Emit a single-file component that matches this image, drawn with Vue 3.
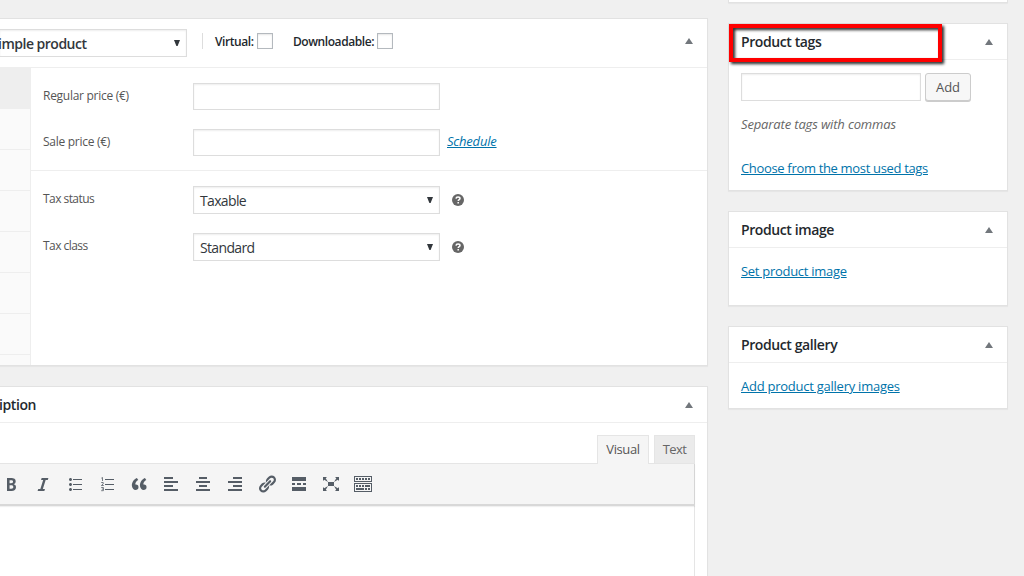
<template>
  <div class="page">
    <main class="col-main">
      <!-- product data -->
      <section class="postbox data-box">
        <header class="data-header">
          <div class="select type-select">
            <span class="t-type">imple product</span>
            <svg class="caret" width="6" height="6" viewBox="0 0 6 6"><path d="M0 0h6L3.6 6H2.4z" /></svg>
          </div>
          <span class="sep"></span>
          <label class="check virtual"><span>Virtual:</span><i class="checkbox"></i></label>
          <label class="check downloadable"><span>Downloadable:</span><i class="checkbox"></i></label>
          <svg class="toggle" width="8" height="6" viewBox="0 0 8 6"><path d="M4 0l4 6H0z" /></svg>
        </header>
        <div class="data-body">
          <ul class="tabs">
            <li v-for="n in 8" :key="n" :class="{ active: n === 1 }"></li>
          </ul>
          <div class="fields">
            <div class="group">
              <div class="row price">
                <span class="label l-regular">Regular price (€)</span>
                <span class="input"></span>
              </div>
              <div class="row price">
                <span class="label l-sale">Sale price (€)</span>
                <span class="input"></span>
                <a class="schedule">Schedule</a>
              </div>
            </div>
            <div class="group tax">
              <div v-for="row in taxRows" :key="row.label" class="row">
                <span class="label">{{ row.label }}</span>
                <span class="select field-select">
                  <span class="value">{{ row.value }}</span>
                  <svg class="caret" width="6" height="6" viewBox="0 0 6 6"><path d="M0 0h6L3.6 6H2.4z" /></svg>
                </span>
                <svg class="help" width="12" height="12" viewBox="0 0 12 12">
                  <circle cx="6" cy="6" r="6" />
                  <path d="M4 4.6C4.1 3.4 4.9 3 6 3s2 .6 2 1.500C8 5.700 6.200 5.600 6.200 7.100M6.200 8v1.500" />
                </svg>
              </div>
            </div>
          </div>
        </div>
      </section>

      <!-- description editor -->
      <section class="postbox desc-box">
        <header class="hndle desc-header">
          <h2 class="t-desc">iption</h2>
          <svg class="toggle" width="8" height="6" viewBox="0 0 8 6"><path d="M4 0l4 6H0z" /></svg>
        </header>
        <div class="editor">
          <div class="editor-tabs">
            <span class="tab tab-visual">Visual</span>
            <span class="tab tab-text">Text</span>
          </div>
          <div class="editor-frame">
            <div class="toolbar">
              <svg v-for="icon in icons" :key="icon.name" class="tool" width="20" height="20" viewBox="0 0 20 20">
                <path :d="icon.d" />
                <path v-if="icon.line" class="thin" :d="icon.line" />
              </svg>
            </div>
          </div>
        </div>
      </section>
    </main>

    <aside class="col-side">
      <section class="postbox prev-box"></section>

      <section class="postbox tags-box">
        <header class="hndle">
          <h2 class="t-tags">Product tags</h2>
          <svg class="toggle" width="8" height="6" viewBox="0 0 8 6"><path d="M4 0l4 6H0z" /></svg>
        </header>
        <div class="highlight"></div>
        <div class="inside">
          <div class="tag-form">
            <span class="tag-input"></span>
            <button class="button">Add</button>
          </div>
          <p class="howto">Separate tags with commas</p>
          <a class="t-choose">Choose from the most used tags</a>
        </div>
      </section>

      <section class="postbox image-box">
        <header class="hndle">
          <h2 class="t-image">Product image</h2>
          <svg class="toggle" width="8" height="6" viewBox="0 0 8 6"><path d="M4 0l4 6H0z" /></svg>
        </header>
        <div class="inside link-only"><a class="t-set">Set product image</a></div>
      </section>

      <section class="postbox gallery-box">
        <header class="hndle">
          <h2 class="t-gallery">Product gallery</h2>
          <svg class="toggle" width="8" height="6" viewBox="0 0 8 6"><path d="M4 0l4 6H0z" /></svg>
        </header>
        <div class="inside link-only"><a class="t-add">Add product gallery images</a></div>
      </section>
    </aside>
  </div>
</template>

<script setup>
const taxRows = [
  { label: 'Tax status', value: 'Taxable' },
  { label: 'Tax class', value: 'Standard' },
]

const icons = [
  { name: 'bold', d: 'M6 4v13h4.54c1.37 0 2.46-.33 3.26-1 .8-.66 1.2-1.58 1.2-2.77 0-.84-.17-1.51-.51-2.01s-.9-.85-1.67-1.03v-.09c.57-.1 1.02-.4 1.36-.9s.51-1.13.51-1.91c0-1.14-.39-1.98-1.17-2.5C12.75 4.26 11.5 4 9.78 4H6zm2.57 5.15V6.26h1.36c.73 0 1.27.11 1.61.32.34.22.51.58.51 1.07 0 .54-.16.92-.47 1.15s-.82.35-1.51.35h-1.5zm0 2.19h1.6c1.44 0 2.16.53 2.16 1.61 0 .6-.17 1.05-.51 1.34s-.86.43-1.57.43H8.57v-3.38z' },
  { name: 'italic', d: 'M14.78 6h-2.13l-2.8 9h2.12l-.62 2H4.6l.62-2h2.14l2.8-9H8.03l.62-2h6.75z' },
  { name: 'ul', d: 'M5.5 7C4.67 7 4 6.33 4 5.5 4 4.68 4.67 4 5.5 4 6.32 4 7 4.68 7 5.5 7 6.33 6.32 7 5.5 7zM8 5h9v1H8V5zm-2.5 7c-.83 0-1.5-.67-1.5-1.5C4 9.68 4.67 9 5.5 9c.82 0 1.5.68 1.5 1.5 0 .83-.68 1.5-1.5 1.5zM8 10h9v1H8v-1zm-2.5 7c-.83 0-1.5-.67-1.5-1.5 0-.82.67-1.5 1.5-1.5.82 0 1.5.68 1.5 1.5 0 .83-.68 1.5-1.5 1.5zM8 15h9v1H8v-1z' },
  { name: 'ol', d: 'M8 5h9v1H8zM8 10h9v1H8zM8 15h9v1H8z', line: 'M4.300 4.200L5.500 3.500V7M4.200 8.500h2v1.400L4.400 11.500h2.400M4.200 13.500h2.200v3.200H4.200M4.800 15.100h1.600' },
  { name: 'quote', d: 'M9.49 13.22c0-.74-.2-1.38-.61-1.9-.62-.78-1.83-.88-2.53-.72-.29-1.65 1.11-3.75 2.92-4.65L7.88 4c-2.73 1.3-5.42 4.28-4.96 8.05C3.21 14.43 4.59 16 6.54 16c.85 0 1.56-.25 2.12-.75s.83-1.18.83-2.03zm8.05 0c0-.74-.2-1.38-.61-1.9-.63-.78-1.83-.88-2.53-.72-.29-1.65 1.11-3.75 2.92-4.65L15.93 4c-2.73 1.3-5.41 4.28-4.95 8.05.29 2.38 1.66 3.95 3.61 3.95.85 0 1.56-.25 2.12-.75s.83-1.18.83-2.03z' },
  { name: 'left', d: 'M12 5V3H3v2h9zm5 4V7H3v2h14zm-5 4v-2H3v2h9zm5 4v-2H3v2h14z' },
  { name: 'center', d: 'M14 5V3H6v2h8zm3 4V7H3v2h14zm-3 4v-2H6v2h8zm3 4v-2H3v2h14z' },
  { name: 'right', d: 'M17 5V3H8v2h9zm0 4V7H3v2h14zm0 4v-2H8v2h9zm0 4v-2H3v2h14z' },
  { name: 'link', d: 'M17.74 2.76c1.68 1.69 1.68 4.41 0 6.1l-1.53 1.52c-1.12 1.12-2.7 1.47-4.14 1.09l2.62-2.61.76-.77.76-.76c.84-.84.84-2.2 0-3.04-.84-.85-2.2-.85-3.04 0l-.77.76-3.38 3.38c-.37-1.44-.02-3.02 1.1-4.14l1.52-1.53c1.69-1.68 4.42-1.68 6.1 0zM8.59 13.43l5.34-5.34c.42-.42.42-1.1 0-1.52-.44-.43-1.13-.39-1.53 0l-5.33 5.34c-.42.42-.42 1.1 0 1.52.44.43 1.13.39 1.52 0zm-.76 2.29l4.14-4.15c.38 1.44.03 3.02-1.09 4.14l-1.52 1.53c-1.69 1.68-4.41 1.68-6.1 0-1.68-1.68-1.68-4.42 0-6.1l1.53-1.52c1.12-1.12 2.7-1.47 4.14-1.1l-4.14 4.15c-.85.84-.85 2.2 0 3.05.84.84 2.2.84 3.04 0z' },
  { name: 'more', d: 'M17 7V3H3v4h14zM6 11V9H3v2h3zm6 0V9H8v2h4zm5 0V9h-3v2h3zm0 6v-4H3v4h14z' },
  { name: 'expand', d: 'M7 8h6v4H7zm-5 5v4h4l-1.200-1.200L7 12l-3.800 2.200zM14 17h4v-4l-1.200 1.200L13 12l2.200 3.800zM14 3l1.300 1.300L13 8l3.800-2.200L18 7V3zM6 3H2v4l1.200-1.200L7 8 4.700 4.300z' },
  { name: 'kitchensink', d: 'M19 2v6H1V2h18zm-1 5V3H2v4h16zM5 4v2H3V4h2zm3 0v2H6V4h2zm3 0v2H9V4h2zm3 0v2h-2V4h2zm3 0v2h-2V4h2zm2 5v9H1V9h18zm-1 8v-7H2v7h16zM5 11v2H3v-2h2zm3 0v2H6v-2h2zm3 0v2H9v-2h2zm6 0v2h-5v-2h5zm-6 3v2H3v-2h8zm3 0v2h-2v-2h2zm3 0v2h-2v-2h2z' },
]
</script>

<style>
body {
  margin: 0;
  overflow: hidden;
}
</style>

<style scoped>
* {
  box-sizing: border-box;
}

.page {
  display: flex;
  gap: 20px;
  width: 1024px;
  height: 576px;
  overflow: hidden;
  background: #f0f0f0;
  color: #444;
  font-family: 'Open Sans', 'Noto Sans', sans-serif;
  font-size: 13px;
  line-height: 18px;
  white-space: nowrap;
}

.postbox {
  background: #fff;
  border: 1px solid #e2e2e2;
  box-shadow: 0 1px 1px rgba(0, 0, 0, 0.04);
}

.toggle {
  flex: none;
  margin-left: auto;
  fill: #72777c;
}

.select,
.input,
.tag-input {
  flex: none;
  background: #fff;
  border: 1px solid #ddd;
  box-shadow: inset 0 1px 2px rgba(0, 0, 0, 0.07);
}

.select {
  display: flex;
  align-items: center;
  justify-content: space-between;
  height: 28px;
  padding: 0 6px;
  color: #32373c;
  font-size: 14px;
}

.value {
  padding-top: 1px;
  letter-spacing: -0.65px;
}

.caret {
  flex: none;
  fill: #32373c;
}

a {
  color: #0073aa;
  text-decoration: underline;
}

/* ---- main column ---- */
.col-main {
  width: 708px;
  padding-top: 18px;
}

.col-main .postbox {
  border-left: 0;
}

.data-box {
  height: 348px;
}

.data-header {
  display: flex;
  align-items: center;
  height: 49px;
  padding: 0 14px 4px 0;
  border-bottom: 1px solid #eee;
  color: #23282d;
  font-size: 12px;
  font-weight: 600;
}

.type-select {
  position: relative;
  top: 2px;
  width: 187px;
  padding-left: 0;
  border-left: 0;
  font-weight: 600;
}

.t-type {
  margin-left: -2px;
  padding-top: 1px;
  letter-spacing: -0.5px;
}

.sep {
  width: 1px;
  height: 16px;
  margin: 0 12px 0 15px;
  background: #ddd;
}

.check {
  display: flex;
  align-items: center;
}

.check span {
  padding-top: 2px;
  letter-spacing: -0.43px;
}

.virtual {
  width: 58px;
  justify-content: space-between;
}

.downloadable {
  width: 100px;
  margin-left: 20px;
  justify-content: space-between;
}

.checkbox {
  flex: none;
  width: 16px;
  height: 16px;
  background: #fff;
  border: 1px solid #b4b9be;
  box-shadow: inset 0 1px 2px rgba(0, 0, 0, 0.1);
}

.data-body {
  display: flex;
  height: 297px;
}

.tabs {
  width: 31px;
  margin: 0;
  padding: 0;
  overflow: hidden;
  list-style: none;
  background: #fafafa;
  border-right: 1px solid #eee;
}

.tabs li {
  height: 41px;
  border-bottom: 1px solid #eee;
}

.tabs .active {
  background: #eee;
}

.fields {
  flex: 1;
}

.group {
  display: flex;
  flex-direction: column;
  gap: 19px;
  height: 103px;
  padding: 15px 0 0 12px;
  border-bottom: 1px solid #eee;
}

.group.tax {
  border-bottom: 0;
}

.row {
  display: flex;
  align-items: center;
}

.label {
  width: 150px;
  padding-bottom: 2px;
  color: #555;
  font-size: 12px;
  letter-spacing: -0.28px;
}

.tax .label {
  letter-spacing: -0.55px;
}

.row.price {
  height: 27px;
}

.input {
  width: 247px;
  height: 27px;
}

.field-select {
  width: 247px;
}

.schedule {
  margin-left: 7px;
  padding-bottom: 3px;
  font-style: italic;
  letter-spacing: -0.2px;
}

.help {
  margin: 0 0 1px 11.5px;
  fill: #666;
}

.help path {
  fill: none;
  stroke: #fff;
  stroke-width: 1.5;
}

.hndle {
  display: flex;
  align-items: center;
  height: 36px;
  padding: 0 14px 0 12px;
  border-bottom: 1px solid #eee;
}

.hndle .toggle {
  margin-top: 1px;
}

.hndle h2 {
  margin: 0;
  padding-top: 1px;
  color: #23282d;
  font-size: 14px;
  font-weight: 600;
  letter-spacing: -0.4px;
}

.desc-box {
  height: 220px;
  margin-top: 20px;
}

.desc-header {
  padding-left: 0;
}

.hndle .t-desc {
  margin-left: -1px;
}

.editor {
  padding: 12px 12px 0 0;
}

.editor-tabs {
  display: flex;
  justify-content: flex-end;
  gap: 5px;
}

.tab {
  position: relative;
  height: 28px;
  padding-top: 4px;
  text-align: center;
  border: 1px solid #e5e5e5;
  border-bottom: 0;
  color: #666;
}

.tab-visual {
  width: 52px;
  height: 29px;
  margin-bottom: -1px;
  background: #f5f5f5;
  color: #555;
  letter-spacing: -0.4px;
  z-index: 1;
}

.tab-text {
  width: 41px;
  background: #ebebeb;
  letter-spacing: -0.6px;
}

.editor-frame {
  height: 130px;
  border: 1px solid #e5e5e5;
  border-left: 0;
}

.toolbar {
  display: flex;
  gap: 12px;
  height: 42px;
  margin-right: -1px;
  padding: 10px 0 0 1px;
  background: #f5f5f5;
  border-right: 1px solid #d5d5d5;
  border-bottom: 2px solid #d8d8d8;
  box-shadow: 0 1px 1px rgba(0, 0, 0, 0.06);
}

.tool {
  flex: none;
  fill: #555d66;
}

.tool .thin {
  fill: none;
  stroke: #555d66;
  stroke-width: 0.8;
}

/* ---- sidebar ---- */
.col-side {
  display: flex;
  flex-direction: column;
  gap: 20px;
  width: 280px;
}

.prev-box {
  height: 3px;
  border-top: 0;
}

.tags-box {
  position: relative;
  height: 168px;
}

.highlight {
  position: absolute;
  top: 0;
  left: 0;
  width: 213px;
  height: 38px;
  border: 4px solid #f00;
  filter: drop-shadow(2px 2px 1.5px rgba(0, 0, 0, 0.85));
}

.inside {
  padding: 13px 12px 0;
}

.tag-form {
  display: flex;
  gap: 4px;
}

.tag-input {
  width: 180px;
  height: 28px;
}

.button {
  width: 46px;
  height: 28px;
  padding: 0;
  background: #f7f7f7;
  border: 1px solid #ccc;
  border-radius: 3px;
  box-shadow: 0 1px 0 #ccc;
  color: #555;
  font-family: inherit;
  font-size: 13px;
}

.howto {
  margin: 14px 0 26px;
  color: #666;
  font-style: italic;
  letter-spacing: -0.14px;
}

.t-choose {
  letter-spacing: -0.33px;
}

.t-set {
  letter-spacing: -0.29px;
}

.t-add {
  letter-spacing: -0.25px;
}

.image-box {
  height: 95px;
}

.gallery-box {
  height: 83px;
}

.link-only {
  padding-top: 14px;
}
</style>
